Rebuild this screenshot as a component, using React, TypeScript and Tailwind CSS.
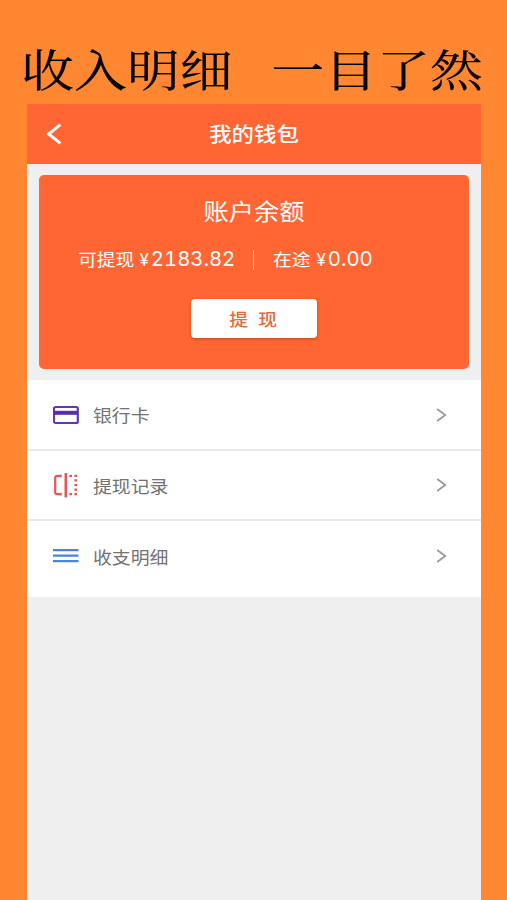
import type { ReactNode } from "react";

const sans = "font-['Noto_Sans_CJK_SC',sans-serif]";

function CardIcon() {
  return (
    <svg width="26" height="20" viewBox="0 0 26 20" fill="none">
      <rect x="1" y="2" width="23.8" height="16" rx="1.6" stroke="#6236b5" strokeWidth="2.2" />
      <path d="M1 7.8h24" stroke="#5a2bb0" strokeWidth="4" />
    </svg>
  );
}

function RecordIcon() {
  return (
    <svg width="26" height="26" viewBox="0 0 26 26" fill="none" stroke="#ea5455">
      <path d="M8.8 3.8H4.2a2 2 0 0 0-2 2v14.4a2 2 0 0 0 2 2h4.6" strokeWidth="2.2" />
      <path d="M12.8 1v24.4" strokeWidth="2.6" />
      <path d="M16.4 3.8h2.6M16.4 22.2h2.6M21.4 3.8h2.6M21.4 8.4h2.6M21.4 13h2.6M21.4 17.6h2.6M21.4 22.2h2.6" strokeWidth="2.2" />
    </svg>
  );
}

function LinesIcon() {
  return (
    <svg width="26" height="16" viewBox="0 0 26 16" fill="none">
      <path d="M0 2.2h25.5M0 7.7h25.5M0 13.2h25.5" stroke="#4a86e0" strokeWidth="2.2" />
    </svg>
  );
}

function Amount({ value }: { value: string }) {
  return (
    <span className="inline-flex items-baseline font-['Inter',sans-serif]">
      <span className="mr-0.5 text-[17px]">¥</span>
      <span className="text-[20.3px] tabular-nums">{value}</span>
    </span>
  );
}

function Row({ icon, label, className }: { icon: ReactNode; label: string; className: string }) {
  return (
    <li className={`flex items-center bg-white pl-[26px] pr-[34px] ${className}`}>
      <span className="flex w-10 shrink-0 items-center">{icon}</span>
      <span className="mt-px origin-left scale-x-[1.11] text-[17px] leading-6 text-[#737373]">{label}</span>
      <svg className="ml-auto" width="11" height="14" viewBox="0 0 11 14" fill="none">
        <path d="M1.2 1l8 6-8 6" stroke="#999" strokeWidth="1.8" />
      </svg>
    </li>
  );
}

export default function App() {
  return (
    <div lang="zh-CN" className={`flex h-[900px] w-[507px] flex-col overflow-hidden bg-[#ff8731] ${sans}`}>
      <h1 className="flex h-[104px] shrink-0 items-start justify-between whitespace-nowrap pl-[21px] pr-[24px] pt-[36px] font-['Noto_Serif_CJK_SC','Noto_Sans_CJK_SC',serif] text-[44.5px] font-normal leading-[64px] text-black [-webkit-text-stroke:0.2px_black]">
        <span className="origin-left scale-x-[1.19]">收入明细</span>
        <span className="origin-right scale-x-[1.19]">一目了然</span>
      </h1>

      <main className="mx-auto flex w-[454px] flex-1 flex-col bg-[#efefef]">
        <header className="grid h-[60px] shrink-0 grid-cols-[60px_1fr_60px] items-center bg-[#ff6633] text-white">
          <svg className="ml-[19px]" width="17" height="22" viewBox="0 0 17 22" fill="none">
            <path d="M14.4 1.6L2.6 11l11.8 9.4" stroke="white" strokeWidth="3" />
          </svg>
          <h2 className="-mt-px scale-x-[1.12] text-center text-[20px] font-medium leading-7">我的钱包</h2>
        </header>

        <section className="mx-3 mt-[11px] flex h-[194px] shrink-0 flex-col rounded-[5px] bg-[#ff6633] text-white">
          <h3 className="mt-[19px] scale-x-[1.12] text-center text-[22.5px] leading-8">账户余额</h3>
          <div className="ml-[39px] mt-[17px] flex h-8 items-center whitespace-nowrap">
            <p className="flex w-[175px] items-baseline">
              <span className="mr-[11px] origin-left scale-x-[1.1] text-[17px]">可提现</span>
              <Amount value="2183.82" />
            </p>
            <i className="mr-[19px] mt-0.5 h-5 w-px bg-white/80" />
            <p className="flex items-baseline">
              <span className="mr-[10px] origin-left scale-x-[1.1] text-[17px]">在途</span>
              <Amount value="0.00" />
            </p>
          </div>
          <button className="mx-auto mt-6 flex h-[39px] w-[126px] items-center justify-center gap-3 rounded-[4px] bg-white pr-0.5 text-[17px] font-medium leading-6 text-[#e9683c] shadow-[0_1px_3px_rgba(130,40,0,0.5)]">
            <span className="scale-x-[1.1]">提</span>
            <span className="scale-x-[1.1]">现</span>
          </button>
        </section>

        <ul className="mt-[11px]">
          <Row icon={<CardIcon />} label="银行卡" className="h-[71px] border-b-2 border-[#e9e9e9]" />
          <Row icon={<RecordIcon />} label="提现记录" className="h-[70px] border-b-2 border-[#e9e9e9]" />
          <Row icon={<LinesIcon />} label="收支明细" className="h-[76px] pb-1.5" />
        </ul>
      </main>
    </div>
  );
}
